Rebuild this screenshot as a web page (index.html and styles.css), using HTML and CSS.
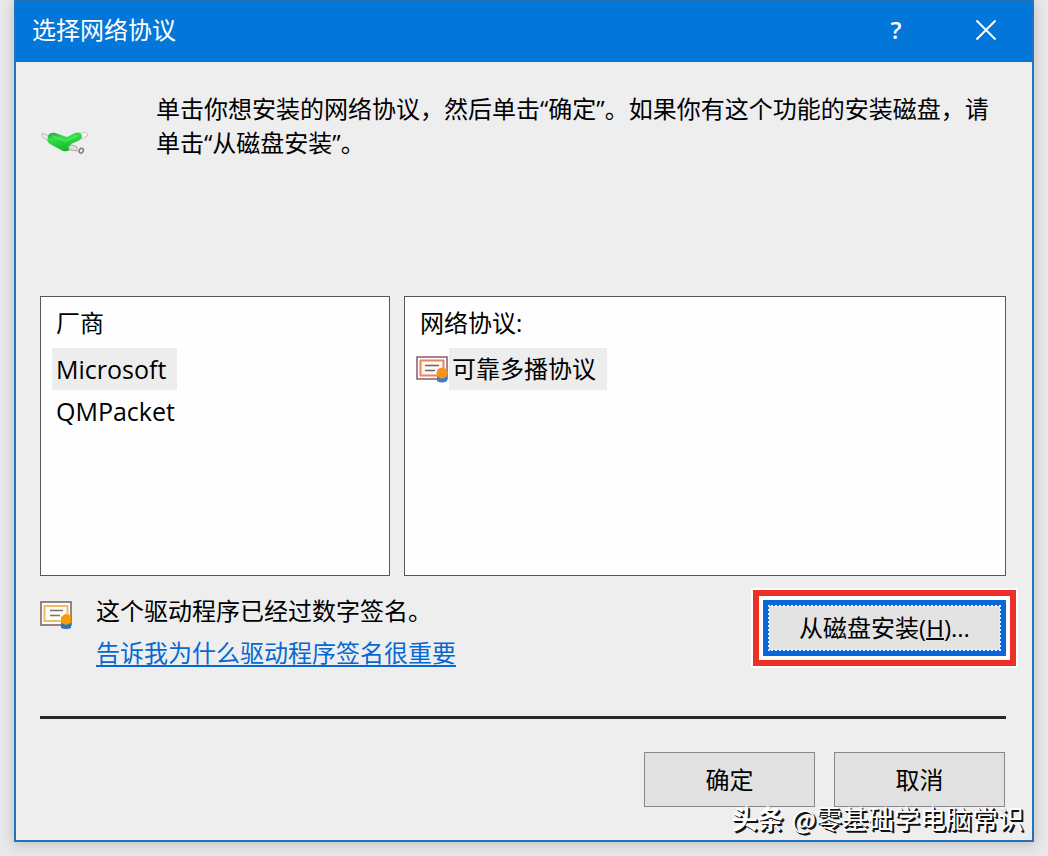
FILE: index.html
```html
<!DOCTYPE html>
<html lang="zh-CN">
<head>
<meta charset="utf-8">
<meta name="viewport" content="width=device-width, initial-scale=1">
<title>选择网络协议</title>
<link rel="stylesheet" href="styles.css">
</head>
<body>
<main class="dialog">
  <header class="titlebar">
    <h1 class="title">选择网络协议</h1>
    <button class="caption-button" type="button" aria-label="帮助">?</button>
    <button class="caption-button" type="button" aria-label="关闭">
      <svg width="22" height="22" viewBox="0 0 22 22" fill="none" stroke="currentColor" stroke-width="2"><path d="M1.5 1.500 20.500 20.500M20.500 1.500 1.500 20.500"/></svg>
    </button>
  </header>
  <div class="content">
    <section class="intro">
      <svg class="network-icon" width="50" height="26" viewBox="0 0 50 26">
        <defs>
          <linearGradient id="tube" x1="0" y1="0" x2="0.300" y2="1">
            <stop offset="0" stop-color="#18a02c"/><stop offset="0.350" stop-color="#35e04c"/><stop offset="1" stop-color="#12b827"/>
          </linearGradient>
        </defs>
        <path d="M2 3 9 6 8 11 2 7Z" fill="#e9e9e9" stroke="#bbb"/>
        <path d="M39 4 45 2 48 5 42 9Z" fill="#fafafa" stroke="#c5c5c5"/>
        <path d="M8 6Q10 2 15 3L27 7 35 3Q41 1 42 6 42 9 38 11L31 14V18Q29 22 23 21L10 14Q6 11 8 6Z" fill="url(#tube)"/>
        <path d="M12 6 26 11 37 6" fill="none" stroke="#5cf070" stroke-width="2" opacity=".5"/>
        <path d="M29 16Q28 20 31 20L37 21V17L32 15Z" fill="#dedede" stroke="#aaa"/>
        <ellipse cx="41.500" cy="20.500" rx="2" ry="2.500" transform="rotate(25 41 20)" fill="#eee" stroke="#777" stroke-width="1.500"/>
      </svg>
      <p class="intro-text">单击你想安装的网络协议，然后单击“确定”。如果你有这个功能的安装磁盘，请单击“从磁盘安装”。</p>
    </section>
    <div class="lists">
      <section class="panel">
        <h2 class="panel-title" id="vendors">厂商</h2>
        <ul class="options vendors" role="listbox" aria-labelledby="vendors">
          <li class="option" role="option" aria-selected="true"><span class="label selected">Microsoft</span></li>
          <li class="option" role="option" aria-selected="false"><span class="label">QMPacket</span></li>
        </ul>
      </section>
      <section class="panel">
        <h2 class="panel-title" id="protocols">网络协议:</h2>
        <ul class="options" role="listbox" aria-labelledby="protocols">
          <li class="option with-icon" role="option" aria-selected="true">
            <svg width="32" height="28" viewBox="0 0 32 28">
              <rect x="1" y="2" width="30" height="22" fill="#fff" stroke="#8a5872" stroke-width="1.500"/>
              <rect x="4.500" y="5.500" width="23" height="15" fill="#fff8f3" stroke="#e8855d" stroke-width="2"/>
              <path d="M9 10.500H23M9 15.500H19" stroke="#6e6270" stroke-width="1.500"/>
              <path d="M21 21H31V26Q26 29 21 26Z" fill="#3c7fc4"/>
              <circle cx="26" cy="18" r="5.500" fill="#f7931e"/>
            </svg>
            <span class="label selected compact">可靠多播协议</span>
          </li>
        </ul>
      </section>
    </div>
    <section class="signing">
      <svg class="signed-icon" width="32" height="30" viewBox="0 0 32 30">
        <rect x="1" y="2" width="30" height="23" fill="#fff" stroke="#775c5c" stroke-width="1.500"/>
        <rect x="4.500" y="6" width="23" height="15" fill="#fffdf5" stroke="#eebc62" stroke-width="2"/>
        <path d="M10 10.500H23M10 15.500H20" stroke="#77706d" stroke-width="1.500"/>
        <path d="M21 22H31V28Q26 30 21 28Z" fill="#2377bd"/>
        <path d="M25 14 31 15V23L26 25 21 23V17Z" fill="#f99a0b"/>
      </svg>
      <div class="signing-text">
        <p>这个驱动程序已经过数字签名。</p>
        <a class="link" href="#signing">告诉我为什么驱动程序签名很重要</a>
      </div>
      <div class="highlight">
        <button class="disk-button" type="button">从磁盘安装(<u>H</u>)...</button>
      </div>
    </section>
    <footer class="actions">
      <button class="button" type="button">确定</button>
      <button class="button" type="button">取消</button>
    </footer>
  </div>
  <div class="watermark"><b>头条</b><span>@零基础学电脑常识</span></div>
</main>
</body>
</html>
```
FILE: styles.css
```css
* { box-sizing: border-box; }

body {
  margin: 0;
  padding: 0 14px 14px;
  min-height: 100vh;
  display: flex;
  background: #e9e8ea;
  color: #000;
  font: 24px/34px "Open Sans", "Noto Sans CJK SC", sans-serif;
}

h1, h2, p, ul { margin: 0; padding: 0; font: inherit; }
ul { list-style: none; }
button { font: inherit; color: inherit; padding: 0; }
svg { display: block; flex: none; }

.dialog {
  position: relative;
  flex: 1;
  display: flex;
  flex-direction: column;
  border: 2px solid #2272b9;
  border-top-width: 1px;
  background: #eeeeef;
  box-shadow: 0 2px 12px #8b8b9080;
}

.titlebar {
  display: flex;
  align-items: center;
  height: 61px;
  padding: 0 1px 3px 16px;
  background: #0277d9;
  color: #fff;
}

.title { flex: 1; }

.caption-button {
  display: grid;
  place-items: center;
  width: 90px;
  height: 58px;
  border: 0;
  background: none;
  font-weight: 600;
}

.content {
  flex: 1;
  display: flex;
  flex-direction: column;
  padding: 30px 26px 33px 24px;
}

.intro {
  display: flex;
  gap: 66px;
  min-height: 204px;
}

.network-icon { margin-top: 38px; }
.intro-text { flex: 1; }

.lists {
  flex: 1;
  display: grid;
  grid-template-columns: 350fr 602fr;
  gap: 14px;
}

.panel {
  padding: 9px 11px;
  border: 1px solid #55595f;
  background: #fefefe;
}

.panel-title { padding-left: 4px; }
.options { padding-top: 8px; }
.option { display: flex; align-items: center; }
.with-icon { gap: 1px; }

.label { padding: 4px 11px 4px 4px; }
.label.compact { padding-left: 3px; }
.vendors { font-size: 25px; }
.selected { background: #ededee; }

.signing {
  display: flex;
  padding-top: 14px;
  height: 143px;
  border-bottom: 3px solid #25272b;
}

.signed-icon { margin-top: 10px; }

.signing-text {
  flex: 1;
  display: grid;
  gap: 8px;
  align-content: start;
  padding: 4px 0 0 24px;
}

.link {
  color: #0868d2;
  text-decoration-thickness: 2px;
  text-underline-offset: 3px;
}

.highlight {
  align-self: flex-start;
  margin-right: -10px;
  padding: 4px;
  border: 6px solid #ee3128;
  outline: 2px solid #fff;
  background: #fff;
}

.disk-button {
  display: block;
  width: 243px;
  height: 56px;
  border: 6px solid #0b66d8;
  outline: 2px dotted #eef3fa;
  outline-offset: -7px;
  background: #e3e3e3;
}

.disk-button u { text-decoration-thickness: 2px; }

.actions {
  display: flex;
  justify-content: flex-end;
  gap: 19px;
  padding: 33px 1px 0 0;
}

.button {
  width: 171px;
  height: 55px;
  border: 1px solid #88888a;
  background: #e1e1e2;
}

.watermark {
  position: absolute;
  right: 8px;
  bottom: 5px;
  display: flex;
  gap: 8px;
  color: #fff;
  font-family: "Noto Sans CJK SC", sans-serif;
  font-size: 26px;
  text-shadow: 2px 2px 0 #111, 1px 1px 0 #111;
}

.watermark b { font-weight: 700; }
```
